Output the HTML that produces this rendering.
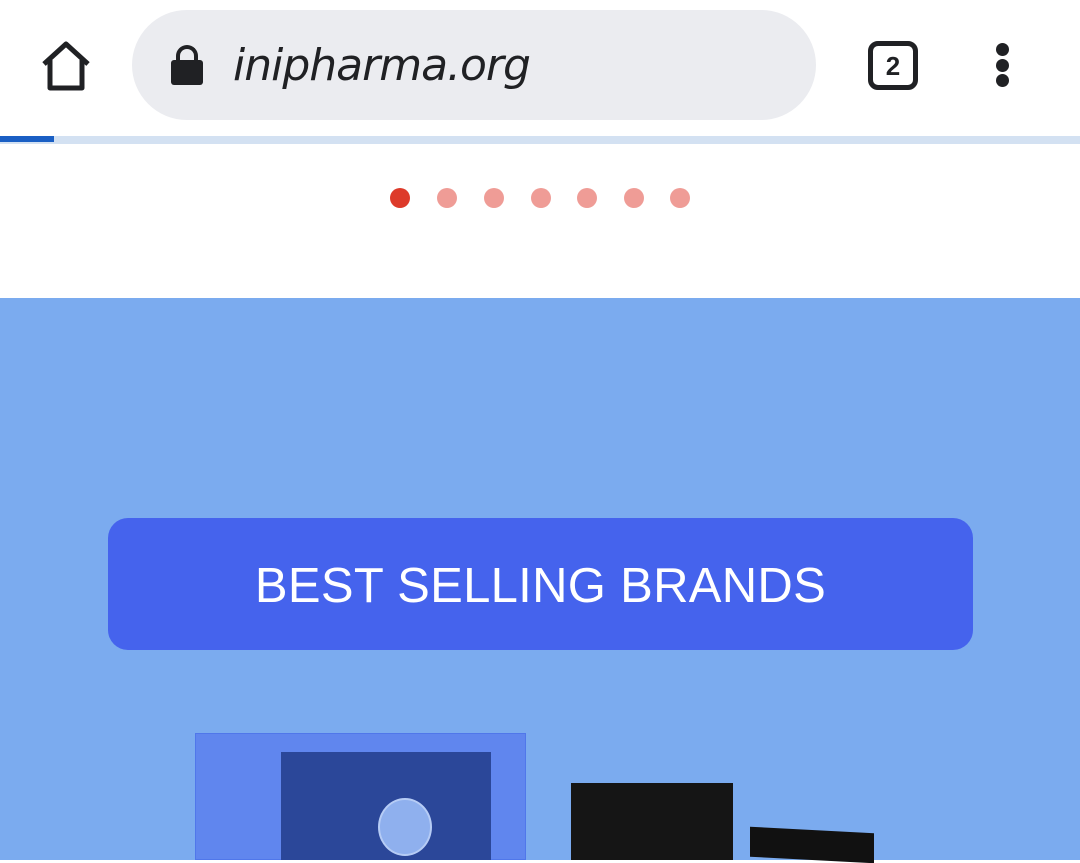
<!DOCTYPE html>
<html><head><style>
body{margin:0;width:1080px;height:860px;overflow:hidden;background:#fff;font-family:"Liberation Sans",sans-serif;position:relative}
.a{position:absolute}
</style></head><body>
<svg class="a" style="left:38px;top:40px" width="56" height="52" viewBox="0 0 56 52"><path d="M6 24 L28 4 L50 24 M12 20 V48 H44 V20" fill="none" stroke="#202124" stroke-width="5" stroke-linejoin="round"/></svg>
<div class="a" style="left:132px;top:10px;width:684px;height:110px;border-radius:55px;background:#ebecf0"></div>
<div class="a" style="left:171px;top:60px;width:32px;height:25px;background:#202124;border-radius:3px"></div>
<div class="a" style="left:176px;top:45px;width:14px;height:20px;border:4px solid #202124;border-bottom:none;border-radius:11px 11px 0 0"></div>
<div class="a" style="left:233px;top:40px;font-size:44px;font-style:italic;color:#202124;font-family:'DejaVu Sans',sans-serif;letter-spacing:-1px">inipharma.org</div>
<div class="a" style="left:868px;top:41px;width:50px;height:49px;border:5px solid #202124;border-radius:10px;box-sizing:border-box;font-weight:bold;font-size:26px;text-align:center;line-height:40px;color:#202124">2</div>
<div class="a" style="left:996px;top:43px;width:13px;height:13px;border-radius:50%;background:#202124"></div>
<div class="a" style="left:996px;top:59px;width:13px;height:13px;border-radius:50%;background:#202124"></div>
<div class="a" style="left:996px;top:74px;width:13px;height:13px;border-radius:50%;background:#202124"></div>
<div class="a" style="left:0;top:136px;width:1080px;height:8px;background:#d3e1f2"></div>
<div class="a" style="left:0;top:136px;width:54px;height:6px;background:#1a5fc4"></div>
<div class="a" style="left:390px;top:188px;width:20px;height:20px;border-radius:50%;background:#dd3a2a"></div>
<div class="a" style="left:437px;top:188px;width:20px;height:20px;border-radius:50%;background:#ef9c96"></div>
<div class="a" style="left:484px;top:188px;width:20px;height:20px;border-radius:50%;background:#ef9c96"></div>
<div class="a" style="left:531px;top:188px;width:20px;height:20px;border-radius:50%;background:#ef9c96"></div>
<div class="a" style="left:577px;top:188px;width:20px;height:20px;border-radius:50%;background:#ef9c96"></div>
<div class="a" style="left:624px;top:188px;width:20px;height:20px;border-radius:50%;background:#ef9c96"></div>
<div class="a" style="left:670px;top:188px;width:20px;height:20px;border-radius:50%;background:#ef9c96"></div>
<div class="a" style="left:0;top:298px;width:1080px;height:562px;background:#7babef"></div>
<div class="a" style="left:108px;top:518px;width:865px;height:132px;border-radius:20px;background:#4563ed;color:#fff;font-size:49px;text-align:center;line-height:136px;letter-spacing:0.3px">BEST SELLING BRANDS</div>
<div class="a" style="left:195px;top:733px;width:331px;height:127px;background:#6086ee;border:1px solid #5077ea;box-sizing:border-box"></div>
<div class="a" style="left:281px;top:752px;width:210px;height:108px;background:#2b4799"></div>
<div class="a" style="left:378px;top:798px;width:54px;height:58px;border-radius:50%;background:#8fb0ee;border:2px solid #b6ccf5;box-sizing:border-box"></div>
<div class="a" style="left:571px;top:783px;width:162px;height:77px;background:#151515"></div>
<div class="a" style="left:750px;top:830px;width:124px;height:30px;background:#111;transform:skewY(3deg)"></div>
</body></html>
